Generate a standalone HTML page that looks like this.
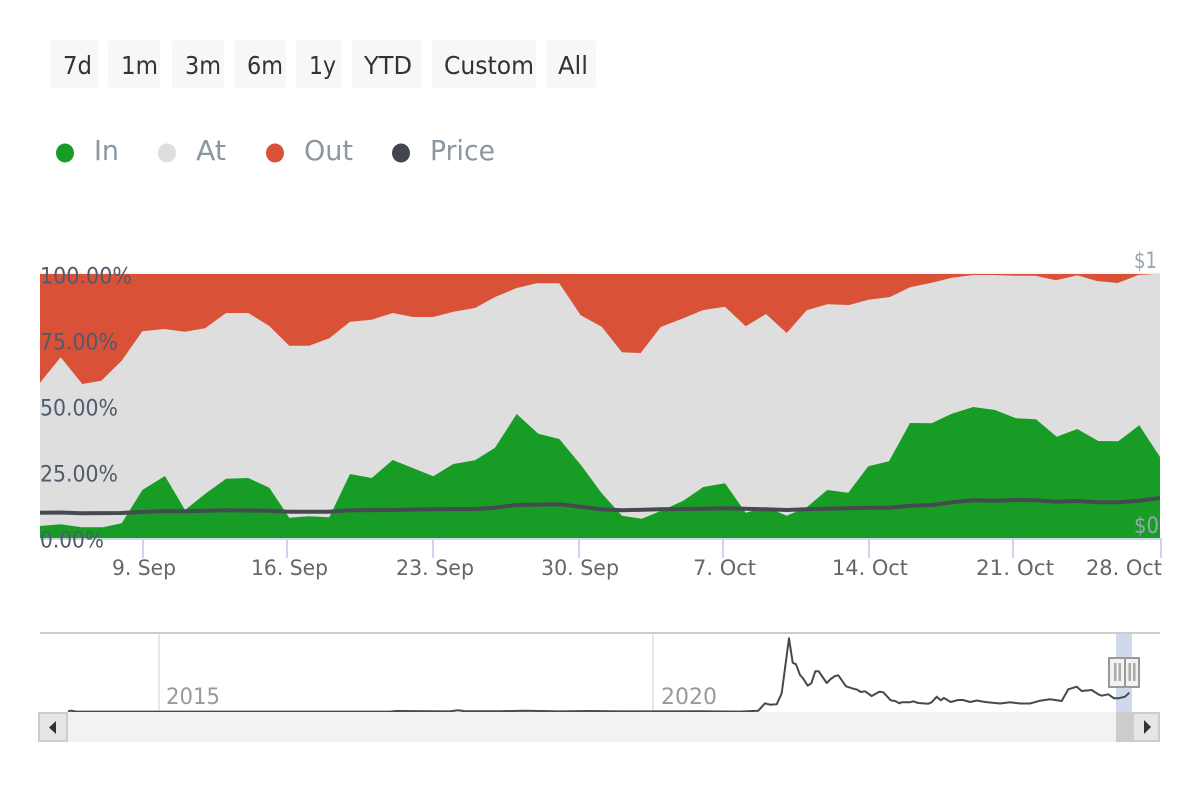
<!DOCTYPE html>
<html lang="en">
<head>
<meta charset="utf-8">
<title>Chart</title>
<style>
html,body{margin:0;padding:0;background:#fff;width:1200px;height:800px;overflow:hidden}
svg{display:block}
text{font-family:"DejaVu Sans","Liberation Sans",sans-serif}
.b{font-size:25px;fill:#333}
.l{font-size:28px;fill:#8a98a3}
.y{font-size:22px;fill:#4f5b6b}
.x{font-size:21px;fill:#666}
.r{font-size:22px;fill:#9aa6b2}
</style>
</head>
<body>
<svg width="1200" height="800" viewBox="0 0 1200 800" xmlns="http://www.w3.org/2000/svg">
<rect width="1200" height="800" fill="#fff"/>
<!-- buttons -->
<g fill="#f7f7f7">
<rect x="50" y="40" width="48" height="48" rx="3"/>
<rect x="108" y="40" width="52" height="48" rx="3"/>
<rect x="172" y="40" width="52" height="48" rx="3"/>
<rect x="234" y="40" width="52" height="48" rx="3"/>
<rect x="296" y="40" width="46" height="48" rx="3"/>
<rect x="352" y="40" width="70" height="48" rx="3"/>
<rect x="432" y="40" width="104" height="48" rx="3"/>
<rect x="546" y="40" width="50" height="48" rx="3"/>
</g>
<g class="b">
<text class="b" x="63" y="74" textLength="29" lengthAdjust="spacingAndGlyphs">7d</text>
<text class="b" x="121" y="74" textLength="37" lengthAdjust="spacingAndGlyphs">1m</text>
<text class="b" x="185" y="74" textLength="36" lengthAdjust="spacingAndGlyphs">3m</text>
<text class="b" x="247" y="74" textLength="36" lengthAdjust="spacingAndGlyphs">6m</text>
<text class="b" x="309" y="74" textLength="27" lengthAdjust="spacingAndGlyphs">1y</text>
<text class="b" x="364" y="74" textLength="48" lengthAdjust="spacingAndGlyphs">YTD</text>
<text class="b" x="444" y="74" textLength="90" lengthAdjust="spacingAndGlyphs">Custom</text>
<text class="b" x="558" y="74" textLength="30" lengthAdjust="spacingAndGlyphs">All</text>
</g>
<!-- legend -->
<ellipse cx="65" cy="153" rx="9" ry="9.5" fill="#179d25"/>
<ellipse cx="167" cy="153" rx="9" ry="9.5" fill="#dedede"/>
<ellipse cx="275" cy="153" rx="9" ry="9.5" fill="#d95137"/>
<ellipse cx="401" cy="153" rx="9" ry="9.5" fill="#43474c"/>
<text class="l" x="94" y="160" textLength="25" lengthAdjust="spacingAndGlyphs">In</text>
<text class="l" x="196" y="160" textLength="30" lengthAdjust="spacingAndGlyphs">At</text>
<text class="l" x="304" y="160" textLength="49" lengthAdjust="spacingAndGlyphs">Out</text>
<text class="l" x="430" y="160" textLength="65" lengthAdjust="spacingAndGlyphs">Price</text>
<!-- chart areas -->
<rect x="40" y="272.5" width="1120" height="1.5" fill="#f0f0f0"/>
<rect x="40" y="274" width="1120" height="264" fill="#d95137"/>
<polygon fill="#dedede" points="40,382.7 60.7,357.3 82.3,384 101.3,380.7 121.7,360.7 142.3,331.3 164,329 185,331.7 205,328.3 226,313 248.3,313 269.3,326 289.3,345.7 309,345.7 329.3,338.3 350,321.7 371.7,319.7 392.7,313 413.3,317 433.3,317 453.3,311.7 475,308 495,297 516.7,288 536.7,283.3 559.3,283.3 580.7,315.3 601.7,326.7 622,352.3 640.7,353 660.7,327 683.3,318.3 703.3,310 725,306.7 745.7,326.3 766,314 786.7,333 806.7,310.3 827.3,304.3 849.3,305 868.3,299.7 890,297 910,287.3 931.7,282.7 951.7,277.7 973.3,275 995,275 1015,275.7 1035,275.7 1056,280.3 1077.3,275.3 1096.7,281 1117.7,283 1138.3,275 1160,273.7 1160,538 40,538"/>
<polygon fill="#179d25" points="40,526 60.7,524.3 81.7,527.3 102.7,527.3 121.7,523.3 142.3,490 165,476 185,510 205,494 226,478.7 248.3,478 269.3,487.7 289.3,517.7 309,516.3 329.3,517.3 350,474 371.7,478 392.7,460 413.3,468.3 433.3,476.3 453.3,464 475,460.3 495,447.7 516.7,414 538.3,433.7 559.3,439 581.7,466 601.7,493.3 622,515.7 641.7,518.7 660.7,511 683.3,500.7 703.3,487 725,483.3 745.7,512.7 766,507 786.7,515.7 806.7,507.3 827.3,490 848.3,492.7 868.3,466.3 889,461.3 910,423 931.7,423.3 951.7,413.7 973.3,407 995,410 1016,418.3 1036,419.3 1056.7,436.7 1077.3,429 1098.3,441 1118.3,441.3 1139.3,425.3 1160,457 1160,538 40,538"/>
<polyline fill="none" stroke="#454a50" stroke-width="4" stroke-linejoin="round" points="40,512.7 60,512.5 82,513.3 121,513 142,512 165,511 185,511.3 226,510.3 269,510.7 289,511.7 329,511.7 350,510.3 392,510 433,509.3 475,509 495,507.7 516,505 560,504.3 602,509.3 622,510.3 660,509.3 703,508.7 725,508.3 766,509.3 787,510 806,509.3 868,507.7 890,507.7 910,505.7 932,505 952,502.3 973,500.3 995,500.7 1016,500 1036,500.3 1056,501.7 1077,501 1098,502.3 1118,502.3 1139,500.7 1160,498"/>
<!-- axis -->
<rect x="40" y="538" width="1122" height="2" fill="#ccd6eb"/>
<g fill="#ccd6eb">
<rect x="142" y="540" width="2" height="18"/>
<rect x="286" y="540" width="2" height="18"/>
<rect x="432" y="540" width="2" height="18"/>
<rect x="578" y="540" width="2" height="18"/>
<rect x="722" y="540" width="2" height="18"/>
<rect x="868" y="540" width="2" height="18"/>
<rect x="1012" y="540" width="2" height="18"/>
<rect x="1160" y="538" width="2" height="20"/>
</g>
<!-- y labels -->
<text class="y" x="40" y="283.5" textLength="92" lengthAdjust="spacingAndGlyphs">100.00%</text>
<text class="y" x="40" y="349.5" textLength="78" lengthAdjust="spacingAndGlyphs">75.00%</text>
<text class="y" x="40" y="415.5" textLength="78" lengthAdjust="spacingAndGlyphs">50.00%</text>
<text class="y" x="40" y="481.5" textLength="78" lengthAdjust="spacingAndGlyphs">25.00%</text>
<text class="y" x="40" y="547.5" textLength="64" lengthAdjust="spacingAndGlyphs">0.00%</text>
<text class="r" x="1134" y="268" textLength="23" lengthAdjust="spacingAndGlyphs">$1</text>
<text class="r" x="1134" y="533" textLength="25" lengthAdjust="spacingAndGlyphs">$0</text>
<!-- x labels -->
<text class="x" x="112" y="575" textLength="64" lengthAdjust="spacingAndGlyphs">9. Sep</text>
<text class="x" x="251" y="575" textLength="77" lengthAdjust="spacingAndGlyphs">16. Sep</text>
<text class="x" x="396" y="575" textLength="78" lengthAdjust="spacingAndGlyphs">23. Sep</text>
<text class="x" x="541" y="575" textLength="78" lengthAdjust="spacingAndGlyphs">30. Sep</text>
<text class="x" x="693" y="575" textLength="63" lengthAdjust="spacingAndGlyphs">7. Oct</text>
<text class="x" x="832" y="575" textLength="76" lengthAdjust="spacingAndGlyphs">14. Oct</text>
<text class="x" x="976" y="575" textLength="78" lengthAdjust="spacingAndGlyphs">21. Oct</text>
<text class="x" x="1086" y="575" textLength="76" lengthAdjust="spacingAndGlyphs">28. Oct</text>
<!-- navigator -->
<rect x="40" y="632" width="1120" height="2" fill="#ccc"/>
<rect x="158" y="634" width="2" height="78" fill="#e6e6e6"/>
<rect x="652" y="634" width="2" height="78" fill="#e6e6e6"/>
<text x="166" y="704" font-size="22" fill="#999" textLength="54" lengthAdjust="spacingAndGlyphs">2015</text>
<text x="661" y="704" font-size="22" fill="#999" textLength="56" lengthAdjust="spacingAndGlyphs">2020</text>
<rect x="1116" y="634" width="16" height="78" fill="#d0d9ec"/>
<polyline fill="none" stroke="#454a50" stroke-width="2" stroke-linejoin="round" points="68,711.6 71,710.6 76,711.6 390,711.6 396,711 450,711.4 458,710.2 465,711.2 500,711.2 525,710.8 560,711.4 590,711 620,711.4 700,711.2 740,711.6 758.3,710.7 765,703.3 770,704.7 776.7,704.3 781.7,693.3 789,638.3 792.7,662.7 796,664.3 800,675 803,678.3 807.7,685.7 811.3,683.3 815.3,671.3 818.7,671.3 826.7,683 830.7,679 835,676 838.3,675.3 846,686.3 853.3,688.7 857.3,689.7 860.7,692 865,691.3 871.7,696 879.3,691.7 883.3,692.3 890.7,700.3 895,701 899.3,703.3 901.7,702.3 910,702.3 913,701.3 918.3,703 928.3,703.7 931.7,702.3 936.7,696.7 940.7,700.3 944,698 950.7,702 958.3,700 963,700 970,702 977,700.5 985,702 1000,703.5 1010,702.3 1020,703.5 1030,703.5 1040,700.7 1050,699.3 1061.7,701 1068.3,689.3 1076.7,686.7 1081.7,691 1091.7,690 1098.3,694.3 1101.7,695.7 1108.3,694.3 1114,698.3 1118.3,698.3 1125,696.7 1129.3,692.7"/>
<!-- scrollbar -->
<rect x="38" y="712" width="1122" height="30" fill="#f2f2f2"/>
<rect x="1116" y="712" width="16" height="30" fill="#ccc"/>
<rect x="39" y="713" width="28" height="28" fill="#e6e6e6" stroke="#ccc" stroke-width="2"/>
<polygon points="49,727.5 56,721 56,734" fill="#333"/>
<rect x="1133" y="713" width="26" height="28" fill="#e6e6e6" stroke="#ccc" stroke-width="2"/>
<polygon points="1144,720 1151,727 1144,734" fill="#333"/>
<!-- handles -->
<rect x="1109" y="658" width="16" height="29" fill="#f2f2f2" stroke="#999" stroke-width="2"/>
<rect x="1125" y="658" width="14" height="29" fill="#f2f2f2" stroke="#999" stroke-width="2"/>
<g fill="#aaa">
<rect x="1114" y="663" width="2.5" height="18"/>
<rect x="1118.5" y="663" width="2.5" height="18"/>
<rect x="1128.5" y="663" width="2.5" height="18"/>
<rect x="1133" y="663" width="2.5" height="18"/>
</g>
</svg>
</body>
</html>
